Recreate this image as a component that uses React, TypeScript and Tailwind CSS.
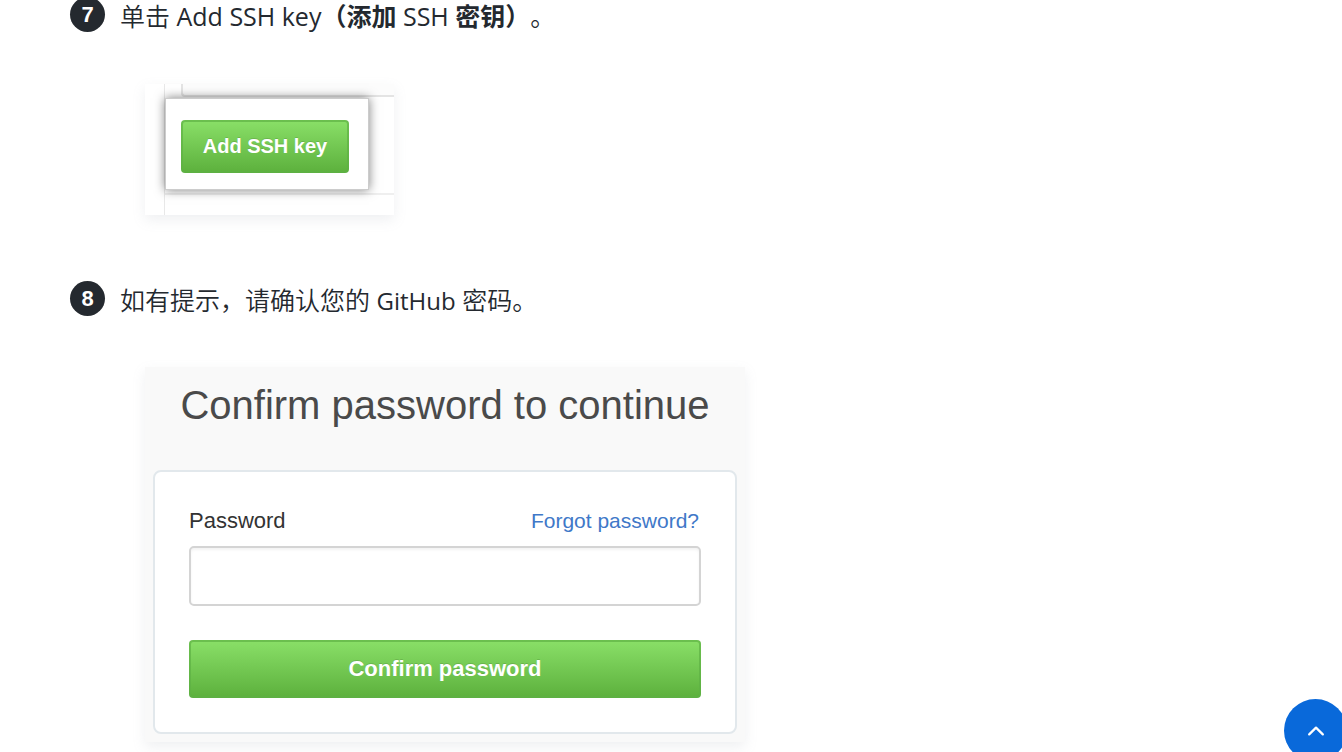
import type { ReactNode } from "react";

function Step({ number, title, children }: { number: number; title: ReactNode; children: ReactNode }) {
  return (
    <li className="flex items-start gap-[15px]">
      <span className="flex size-[35px] shrink-0 items-center justify-center rounded-full bg-[#24292f] font-['Liberation_Sans',sans-serif] text-[22px] leading-none font-bold text-white">
        {number}
      </span>
      <div className="min-w-0 flex-1">
        <p className="text-[25px] leading-[38px] font-[350] [text-spacing-trim:space-all]">{title}</p>
        {children}
      </div>
    </li>
  );
}

const greenButton =
  "rounded-[4px] border-2 border-[#5eb045]/70 bg-linear-to-b from-[#8ae068] to-[#5cb03c] bg-origin-border pb-[2px] font-bold text-white [text-shadow:0_-1px_0_rgba(0,0,0,0.12)]";

function AddKeyFigure() {
  return (
    <div className="ml-[25px] mt-[49px] flex h-[131px] max-w-[249px] bg-white font-['Liberation_Sans',sans-serif] shadow-[0_5px_12px_rgba(149,157,165,0.15)]">
      <div className="w-5 shrink-0 border-r border-[#e8e8e8]" />
      <div className="flex min-w-0 flex-1 flex-col">
        <div className="ml-4 h-[13px] shrink-0 rounded-bl-[4px] border-b-2 border-l-2 border-[#e4e4e4] bg-[#fcfcfc]" />
        <div className="flex h-[98px] items-start border-b-2 border-[#efefef] pt-px">
          <div className="relative flex h-[92px] w-[204px] items-start border border-[#cccccc] bg-white pt-[21px] pl-[15px] shadow-[0_0_10px_rgba(0,0,0,0.5)]">
            <button type="button" className={`${greenButton} h-[53px] w-[168px] text-[20px]`}>
              Add SSH key
            </button>
          </div>
        </div>
      </div>
    </div>
  );
}

function PasswordFigure() {
  return (
    <form
      onSubmit={(event) => event.preventDefault()}
      className="ml-[25px] mt-[48px] max-w-[600px] bg-[#f9f9f9] px-2 pb-2 font-['Liberation_Sans',sans-serif] shadow-[0_5px_12px_rgba(149,157,165,0.15)]"
    >
      <h2 className="flex h-[103px] items-start justify-center pt-[13px] text-[40px] leading-[50px] whitespace-nowrap text-[#4a4a4a]">
        Confirm password to continue
      </h2>
      <div className="rounded-[8px] border-2 border-[#e2e8ec] bg-white px-[34px] pt-[34px] pb-[34px]">
        <div className="flex h-[40px] items-start justify-between leading-[30px]">
          <label htmlFor="password" className="text-[22px] text-[#333333]">
            Password
          </label>
          <a href="#forgot" className="pr-[2px] text-[21px] text-[#4078c8]">
            Forgot password?
          </a>
        </div>
        <input
          id="password"
          type="password"
          className="block h-[60px] w-full rounded-[5px] border-2 border-[#d4d4d4] bg-white px-3 text-[22px] shadow-[inset_0_2px_3px_rgba(0,0,0,0.05)] outline-none"
        />
        <button type="submit" className={`${greenButton} mt-[34px] h-[58px] w-full text-[22px]`}>
          Confirm password
        </button>
      </div>
    </form>
  );
}

export default function App() {
  return (
    <main className="h-screen overflow-hidden bg-white font-['Open_Sans','Noto_Sans_CJK_SC',sans-serif] text-[#24292f]">
      <ol className="-mt-[3px] flex flex-col gap-[66px] px-[70px]">
        <Step
          number={7}
          title={
            <>
              单击 <span className="font-medium">Add SSH key</span>
              <strong className="font-bold">（添加</strong> <span className="font-normal">SSH</span>{" "}
              <strong className="font-bold">密钥）</strong>。
            </>
          }
        >
          <AddKeyFigure />
        </Step>
        <Step
          number={8}
          title={
            <>
              如有提示，请确认您的 <span className="text-[24px] leading-none font-normal">GitHub</span> 密码。
            </>
          }
        >
          <PasswordFigure />
        </Step>
      </ol>
      <a
        href="#top"
        aria-label="返回顶部"
        className="fixed -right-[5px] -bottom-[10px] flex size-[63px] items-center justify-center rounded-full bg-[#0969da] text-white"
      >
        <svg viewBox="0 0 16 10" className="h-[10px] w-4" fill="none" stroke="currentColor" strokeWidth="2.2" strokeLinecap="round" strokeLinejoin="round">
          <path d="M1.2 8.4 8 1.6l6.800 6.800" />
        </svg>
      </a>
    </main>
  );
}
